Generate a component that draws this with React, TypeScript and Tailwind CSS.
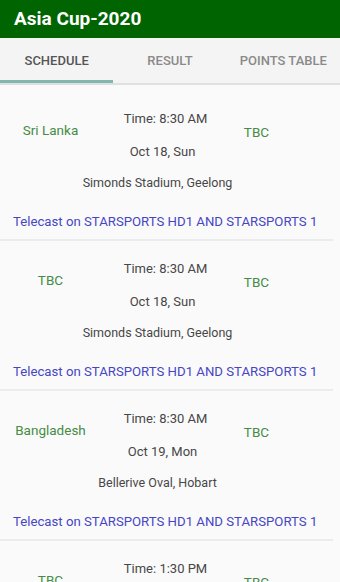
const matches = [
  { home: "Sri Lanka", away: "TBC", time: "8:30 AM", date: "Oct 18, Sun", venue: "Simonds Stadium, Geelong" },
  { home: "TBC", away: "TBC", time: "8:30 AM", date: "Oct 18, Sun", venue: "Simonds Stadium, Geelong" },
  { home: "Bangladesh", away: "TBC", time: "8:30 AM", date: "Oct 19, Mon", venue: "Bellerive Oval, Hobart" },
  { home: "TBC", away: "TBC", time: "1:30 PM", date: "Oct 19, Mon", venue: "Bellerive Oval, Hobart" },
];

const tabs = ["SCHEDULE", "RESULT", "POINTS TABLE"];

function MatchCard({ m }: { m: (typeof matches)[number] }) {
  return (
    <div className="h-[150px] mr-[7px] border-b-2 border-[#ececec]">
      <div className="flex">
        <div className="w-[101px] pt-[29px] text-center text-[13.5px] leading-[20px] text-[#468c46]">
          {m.home}
        </div>
        <div className="w-[127px] pt-[18px] text-center text-[13px] text-[#474747]">
          <div className="h-[20px] leading-[20px] pl-[2px]">Time: {m.time}</div>
          <div className="h-[20px] leading-[20px] mt-[13px] pr-[4px]">{m.date}</div>
        </div>
        <div className="w-[57px] pt-[31px] text-center text-[13.5px] leading-[20px] text-[#468c46]">
          {m.away}
        </div>
      </div>
      <div className="w-[315px] mt-[11px] h-[20px] leading-[20px] text-center text-[12.5px] text-[#474747]">
        {m.venue}
      </div>
      <div className="mt-[19px] h-[20px] leading-[20px] pl-[13px] text-[13.2px] text-[#4646c4] whitespace-nowrap">
        Telecast on STARSPORTS HD1 AND STARSPORTS 1
      </div>
    </div>
  );
}

export default function App() {
  return (
    <div className="w-[340px] h-[582px] overflow-hidden bg-[#fafafa]" style={{ fontFamily: "Roboto, 'Liberation Sans', sans-serif" }}>
      <div className="h-[38px] bg-[#006400] flex items-center pl-[14px]">
        <span className="text-white text-[19px] font-bold">Asia Cup-2020</span>
      </div>
      <div className="h-[47px] bg-[#f4f4f4] flex border-b-2 border-[#e0e0e0]">
        {tabs.map((t, i) => (
          <div key={t} className="relative flex-1 flex items-center justify-center">
            <span className={`text-[13px] font-medium ${i === 0 ? "text-[#555]" : "text-[#8a8a8a]"}`}>{t}</span>
            {i === 0 && <div className="absolute left-0 right-0 bottom-0 h-[3px] bg-[#80b7b0]" />}
          </div>
        ))}
      </div>
      <div className="pt-[6px]">
        {matches.map((m, i) => (
          <MatchCard key={i} m={m} />
        ))}
      </div>
    </div>
  );
}
